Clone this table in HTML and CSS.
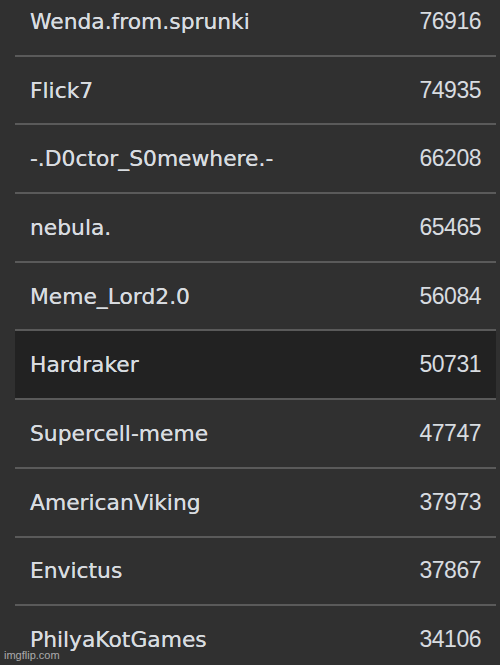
FILE: index.html
```html
<!DOCTYPE html>
<html>
<head>
  <title>Leaderboard</title>
  <link rel="stylesheet" href="styles.css">
</head>
<body>
  <div class="board">
    <div class="row"><span class="name">Wenda.from.sprunki</span><span class="score">76916</span></div>
    <div class="row"><span class="name">Flick7</span><span class="score">74935</span></div>
    <div class="row"><span class="name">-.D0ctor_S0mewhere.-</span><span class="score">66208</span></div>
    <div class="row"><span class="name">nebula.</span><span class="score">65465</span></div>
    <div class="row"><span class="name">Meme_Lord2.0</span><span class="score">56084</span></div>
    <div class="row me"><span class="name">Hardraker</span><span class="score">50731</span></div>
    <div class="row"><span class="name">Supercell-meme</span><span class="score">47747</span></div>
    <div class="row"><span class="name">AmericanViking</span><span class="score">37973</span></div>
    <div class="row"><span class="name">Envictus</span><span class="score">37867</span></div>
    <div class="row"><span class="name">PhilyaKotGames</span><span class="score">34106</span></div>
  </div>
  <div class="mark">imgflip.com</div>
</body>
</html>
```

FILE: styles.css
```css
html, body { margin: 0; height: 100%; overflow: hidden; }
body { background: #303030; color: #d8dce0; position: relative; }
.board { margin: -12px 4px 0 15px; }
.row {
  display: flex; justify-content: space-between; align-items: center;
  height: 66.7px; padding: 0 15px; border-bottom: 2px solid #5a5a5a;
}
.row.me { background: #222222; }
.name {
  font-family: "DejaVu Sans", Verdana, sans-serif; font-size: 21.8px;
  text-shadow: 0 0 0.6px #d8dce0;
}
.score { font-family: "Liberation Sans", Arial, sans-serif; font-size: 23px; letter-spacing: -0.5px; }
.mark {
  position: absolute; left: 4px; bottom: 4px;
  font-family: "Liberation Sans", Arial, sans-serif; font-size: 11px; color: rgba(255,255,255,0.6);
}
```
